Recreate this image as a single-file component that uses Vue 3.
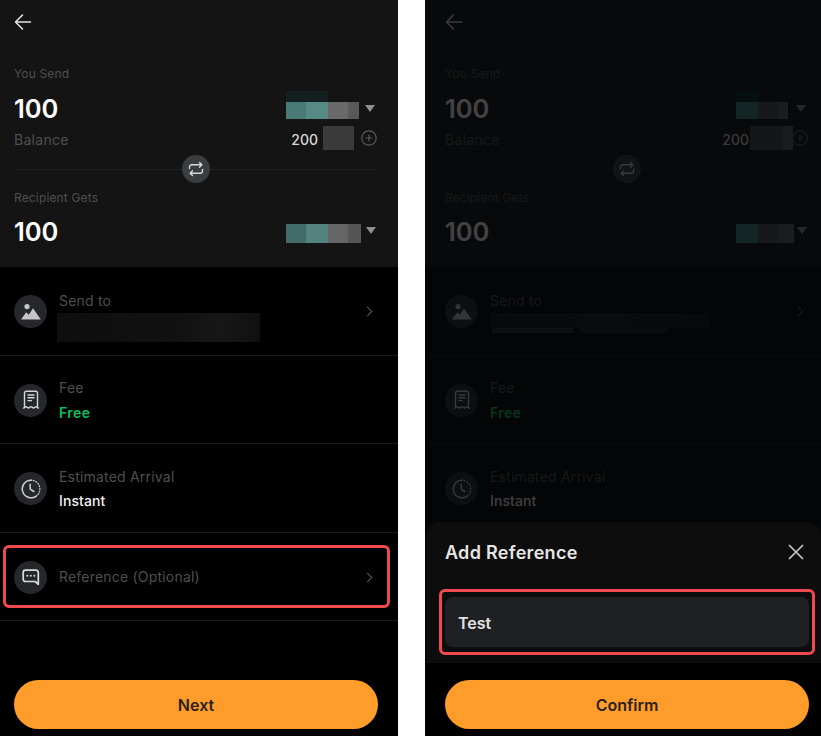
<script setup>
// the two phone screens side by side, only the blurred patches differ
const phones = [
  {
    dim: false,
    sendMask: {
      top: { w: 42, bg: '#13201f' },
      parts: [[20, '#4a7a76'], [22, '#588a85'], [20, '#6a6a6a'], [11, '#595959']]
    },
    getMask: [[20, '#426a68'], [22, '#54837f'], [20, '#666666'], [13, '#555555']],
    balanceMask: [[31, '#3a3a3a']]
  },
  {
    dim: true,
    sendMask: {
      top: { w: 22, bg: '#0c2a2a' },
      parts: [[22, '#3f8582'], [20, '#4f4f4f'], [10, '#606060']]
    },
    getMask: [[22, '#3f8582'], [20, '#4f4f4f'], [16, '#606060']],
    balanceMask: [[32, '#4a4a4a'], [11, '#5c5c5c']]
  }
]
</script>

<template>
  <div class="page">
    <section v-for="phone in phones" :key="phone.dim" class="phone" :class="{ 'phone--dim': phone.dim }">
      <header class="top">
        <div class="nav">
          <svg width="18" height="18" viewBox="0 0 18 18" fill="none" stroke="#e2e2e2" stroke-width="1.6" stroke-linecap="round" stroke-linejoin="round">
            <path d="M16.5 9H1.5M8.5 2 1.5 9l7 7" />
          </svg>
        </div>

        <div class="small-label first">You Send</div>
        <div class="amount-row first">
          <span class="amount">100</span>
          <div class="mask-col">
            <div class="mask-top" :style="{ width: phone.sendMask.top.w + 'px', background: phone.sendMask.top.bg }"></div>
            <div class="mask">
              <i v-for="(p, i) in phone.sendMask.parts" :key="i" :style="{ width: p[0] + 'px', background: p[1] }"></i>
            </div>
          </div>
          <span class="caret"></span>
        </div>

        <div class="balance-row">
          <span class="balance-label">Balance</span>
          <div class="balance-right">
            <span class="balance-value">200</span>
            <div class="balance-mask">
              <i v-for="(p, i) in phone.balanceMask" :key="i" :style="{ width: p[0] + 'px', background: p[1] }"></i>
            </div>
            <svg class="plus" width="16" height="16" viewBox="0 0 16 16" fill="none" stroke="#5c5c5c" stroke-width="1.2" stroke-linecap="round">
              <circle cx="8" cy="8" r="7.2" />
              <path d="M8 5v6M5 8h6" />
            </svg>
          </div>
        </div>

        <div class="swap-line">
          <div class="swap">
            <svg width="16" height="16" viewBox="0 0 16 16" fill="none" stroke="#d8d8d8" stroke-width="1.4" stroke-linecap="round" stroke-linejoin="round">
              <path d="M1.5 7.5V6a2.2 2.2 0 0 1 2.2-2.2h10M11.5 1.4l2.4 2.4-2.4 2.4" />
              <path d="M14.5 8.5V10a2.2 2.2 0 0 1-2.2 2.2h-10M4.500 14.600 2.100 12.200l2.400-2.400" />
            </svg>
          </div>
        </div>

        <div class="small-label recipient">Recipient Gets</div>
        <div class="amount-row second">
          <span class="amount">100</span>
          <div class="mask-col">
            <div class="mask-gap"></div>
            <div class="mask tall">
              <i v-for="(p, i) in phone.getMask" :key="i" :style="{ width: p[0] + 'px', background: p[1] }"></i>
            </div>
          </div>
          <span class="caret"></span>
        </div>
      </header>

      <div class="rows">
        <div class="row">
          <span class="icon">
            <svg width="20" height="18" viewBox="0 0 20 18" fill="#c4c4c6">
              <circle cx="6" cy="3.600" r="2.600" />
              <path d="M0 16.500 5.200 9.200l2.600 2.600L12 5.200l7.800 11.300z" />
            </svg>
          </span>
          <div class="stack stack--send">
            <div class="row-label">Send to</div>
            <div class="send-mask">
              <template v-if="phone.dim">
                <div class="send-mask-bar"></div>
                <div class="send-leak"><i></i><b></b></div>
              </template>
            </div>
          </div>
          <span class="chevron"></span>
        </div>

        <div class="row">
          <span class="icon">
            <svg width="18" height="20" viewBox="0 0 18 20" fill="none" stroke="#d6d6d6" stroke-width="1.4" stroke-linecap="round" stroke-linejoin="round">
              <path d="M2.500 16.500V3A1.800 1.800 0 0 1 4.300 1.200h9.400A1.800 1.800 0 0 1 15.500 3v13.500" />
              <path d="M1.500 18c1.300 0 1.500-1.300 2.500-1.300s1.400 1.300 2.500 1.300 1.400-1.300 2.500-1.300 1.400 1.300 2.500 1.300 1.500-1.300 2.500-1.300 1.200 1.300 2.500 1.300" />
              <path d="M6 5h6M6 7.800h6M6 10.600h3.500" />
            </svg>
          </span>
          <div class="stack">
            <div class="row-label">Fee</div>
            <div class="row-value free">Free</div>
          </div>
        </div>

        <div class="row">
          <span class="icon">
            <svg width="20" height="20" viewBox="0 0 20 20" fill="none" stroke="#d2d2d2" stroke-width="1.500" stroke-linecap="round" stroke-linejoin="round">
              <path d="M10 1.200A8.800 8.800 0 1 0 15 17.300" />
              <path d="M15 17.300A8.800 8.800 0 0 0 10 1.200" stroke-width="1.200" stroke-dasharray="1 1.700" />
              <path d="M9.200 5.200v5l3.600 2.300" />
            </svg>
          </span>
          <div class="stack">
            <div class="row-label">Estimated Arrival</div>
            <div class="row-value">Instant</div>
          </div>
        </div>

        <div class="row" :class="{ 'row--marked': !phone.dim }">
          <span class="icon">
            <svg width="18" height="17" viewBox="0 0 18 17" fill="none" stroke="#dcdcdc" stroke-width="1.700" stroke-linejoin="round">
              <path d="M3.500 1.200h10.500A2.300 2.300 0 0 1 16.300 3.500v11.800l-3.200-2.800H3.500A2.300 2.300 0 0 1 1.200 10.200V3.500A2.300 2.300 0 0 1 3.500 1.200z" />
              <circle cx="5.300" cy="6.800" r="1" fill="#dcdcdc" stroke="none" />
              <circle cx="8.800" cy="6.800" r="1" fill="#dcdcdc" stroke="none" />
              <circle cx="12.300" cy="6.800" r="1" fill="#dcdcdc" stroke="none" />
            </svg>
          </span>
          <div class="stack">
            <div class="row-label">Reference (Optional)</div>
          </div>
          <span class="chevron"></span>
        </div>
      </div>

      <div v-if="!phone.dim" class="foot">
        <button class="cta">Next</button>
      </div>

      <template v-if="phone.dim">
        <div class="scrim"></div>
        <div class="sheet">
          <div class="sheet-card">
            <div class="sheet-head">
              <span class="sheet-title">Add Reference</span>
              <svg width="16" height="16" viewBox="0 0 16 16" fill="none" stroke="#c9c9c9" stroke-width="1.700" stroke-linecap="round">
                <path d="M1.500 1.500l13 13M14.500 1.500l-13 13" />
              </svg>
            </div>
            <div class="ring">
              <div class="input">Test</div>
            </div>
          </div>
          <div class="sheet-foot">
            <button class="cta">Confirm</button>
          </div>
        </div>
      </template>
    </section>
  </div>
</template>

<style>
html,
body {
  margin: 0;
  background: #fff;
}
</style>

<style scoped>
.page {
  width: 821px;
  height: 736px;
  display: flex;
  gap: 27px;
  overflow: hidden;
  background: #fff;
  font-family: Inter, "Liberation Sans", sans-serif;
}

.phone {
  --pl: 14px;
  --pr: 20px;
  position: relative;
  width: 398px;
  height: 736px;
  flex: none;
  display: flex;
  flex-direction: column;
  background: #000;
  overflow: hidden;
}

.phone--dim {
  --pl: 20px;
  --pr: 12px;
  width: 396px;
}

.top {
  height: 267px;
  flex: none;
  box-sizing: border-box;
  padding: 0 var(--pr) 0 var(--pl);
  background: #141414;
}

.nav {
  height: 43px;
  display: flex;
  align-items: center;
}

.small-label {
  height: 16px;
  font-size: 12px;
  line-height: 18px;
  letter-spacing: 0.15px;
  color: #4f4f4f;
}

.small-label.first {
  margin-top: 22px;
}

.small-label.recipient {
  line-height: 20px;
}

.amount-row {
  height: 34px;
  margin-top: 10px;
  display: flex;
  justify-content: flex-end;
  gap: 5px;
}

.amount-row.first {
  gap: 6px;
}

.amount-row.first .caret {
  margin-right: 3px;
}

.phone--dim .amount-row.first {
  gap: 8px;
}

.amount-row.second {
  margin-top: 9px;
}

.phone--dim .amount-row.second {
  gap: 3px;
}

.amount {
  margin-right: auto;
  font-size: 25.5px;
  font-weight: 600;
  line-height: 36px;
  color: #fff;
}

.amount-row.second .amount {
  line-height: 38px;
}

.mask-top {
  height: 11px;
}

.mask-gap {
  height: 11px;
}

.mask {
  display: flex;
  height: 17px;
}

.mask.tall {
  height: 19px;
}

.caret {
  align-self: center;
  margin-right: 2px;
  width: 0;
  height: 0;
  border-left: 5px solid transparent;
  border-right: 5px solid transparent;
  border-top: 7px solid #8f8f8f;
}

.balance-row {
  height: 24px;
  margin-top: 1px;
  display: flex;
  align-items: center;
  justify-content: space-between;
}

.balance-label {
  margin-top: 2px;
  font-size: 14px;
  letter-spacing: 0.3px;
  color: #4f4f4f;
}

.balance-right {
  display: flex;
  align-items: center;
  gap: 5px;
}

.balance-value {
  margin-top: 2px;
  font-size: 14px;
  font-weight: 500;
  color: #d8d8d8;
}

.balance-mask {
  display: flex;
  height: 24px;
}

.plus {
  margin-left: 2px;
  margin-right: 1px;
}

.phone--dim .balance-right {
  gap: 1px;
}

.phone--dim .plus {
  margin-left: -2px;
}

.swap-line {
  height: 38px;
  display: flex;
  align-items: center;
  justify-content: center;
  background: linear-gradient(#1f1f1f, #1f1f1f) center / 100% 1px no-repeat;
}

.swap {
  width: 28px;
  height: 28px;
  border-radius: 50%;
  background: #3a3d40;
  display: flex;
  align-items: center;
  justify-content: center;
}

.rows {
  flex: none;
}

.row {
  position: relative;
  height: 88.5px;
  box-sizing: border-box;
  padding: 2px var(--pr) 0 var(--pl);
  display: flex;
  align-items: center;
  gap: 12px;
  border-bottom: 1px solid #1a1a1a;
}

.row--marked::after {
  content: "";
  position: absolute;
  left: 3px;
  right: 8px;
  top: 12px;
  bottom: 12px;
  border: 3px solid #f04a4f;
  border-radius: 6px;
}

.icon {
  width: 33px;
  height: 33px;
  flex: none;
  border-radius: 50%;
  background: #25272b;
  display: flex;
  align-items: center;
  justify-content: center;
}

.stack {
  flex: 1;
  display: flex;
  flex-direction: column;
  gap: 4.500px;
}

.stack--send {
  margin-top: 9px;
  gap: 2px;
}

.row-label {
  font-size: 14px;
  line-height: 20px;
  letter-spacing: 0.2px;
  color: #4f4f4f;
}

.row-value {
  font-size: 14px;
  font-weight: 500;
  line-height: 20px;
  letter-spacing: 0.1px;
  color: #f2f2f2;
}

.row-value.free {
  font-weight: 600;
  letter-spacing: 0.4px;
  color: #0fbf5f;
}

.send-mask {
  height: 29px;
  width: 203px;
  margin-left: -2px;
  background: linear-gradient(90deg, #0e0e0e, #111 60%, #171717 80%, #101010);
}

.phone--dim .send-mask {
  width: 219px;
  margin-left: 0;
  background: none;
}

.send-mask-bar {
  height: 15px;
  background: linear-gradient(90deg, #141414, #1a1a1a 55%, #121212);
}

.send-leak {
  display: flex;
  gap: 4px;
  padding-left: 2px;
}

.send-leak i {
  width: 82px;
  height: 5px;
  background: #2a2a2a;
}

.send-leak b {
  width: 90px;
  height: 5px;
  border-radius: 0 0 6px 6px;
  background: #1c1c1c;
}

.chevron {
  flex: none;
  width: 6px;
  height: 6px;
  margin-right: 7px;
  border-top: 1.300px solid #5c5c5c;
  border-right: 1.300px solid #5c5c5c;
  transform: rotate(45deg);
}

.foot {
  margin-top: auto;
  padding: 0 var(--pr) 7px var(--pl);
}

.cta {
  display: block;
  width: 100%;
  height: 49px;
  border: 0;
  border-radius: 25px;
  background: #ff9c2a;
  font-family: inherit;
  font-size: 16px;
  font-weight: 600;
  color: #2a2218;
}

.scrim {
  position: absolute;
  inset: 0;
  background: rgba(5, 6, 8, 0.76);
}

.sheet {
  position: absolute;
  left: 1px;
  right: 0;
  bottom: 0;
  height: 214px;
  display: flex;
  flex-direction: column;
}

.sheet-card {
  height: 141px;
  box-sizing: border-box;
  padding: 0 var(--pr) 0 calc(var(--pl) - 1px);
  border-radius: 14px 14px 0 0;
  background: #0d0d0d;
}

.sheet-head {
  height: 60px;
  padding-right: 5px;
  display: flex;
  align-items: center;
  justify-content: space-between;
}

.sheet-title {
  font-size: 18px;
  font-weight: 600;
  letter-spacing: 0.3px;
  color: #e6e6e6;
}

.ring {
  margin: 7px -6px 0;
  padding: 5px 3px;
  border: 3px solid #f04a4f;
  border-radius: 6px;
}

.input {
  height: 50px;
  box-sizing: border-box;
  padding-left: 13px;
  border-radius: 8px;
  background: #1f2024;
  font-size: 16px;
  font-weight: 600;
  line-height: 52px;
  color: #e2e2e2;
}

.sheet-foot {
  flex: 1;
  padding: 17px var(--pr) 0 calc(var(--pl) - 1px);
  background: #000;
}
</style>
